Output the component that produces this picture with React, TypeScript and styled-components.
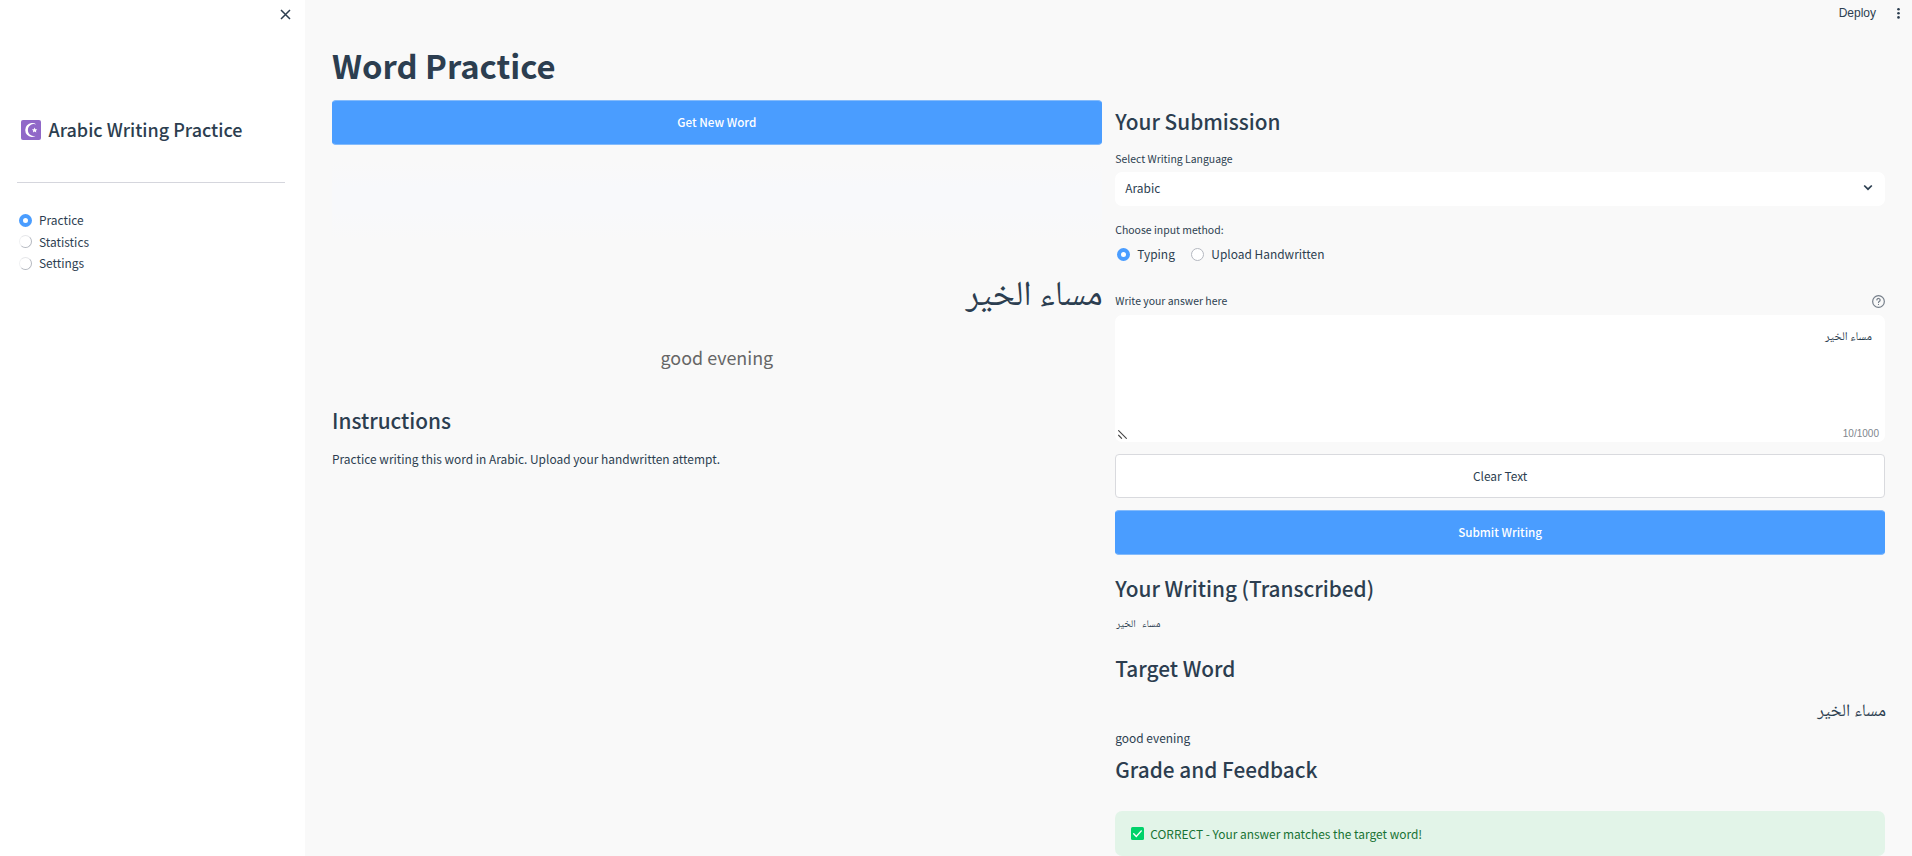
import React from "react";
import styled, { createGlobalStyle } from "styled-components";

const Global = createGlobalStyle`
  * { box-sizing: border-box; }
  body { margin: 0; background: #f9f9f9; overflow: hidden; }
`;

const sans = '"Noto Sans CJK SC", "Noto Sans", sans-serif';
const arabic = '"Noto Naskh Arabic", "DejaVu Sans", sans-serif';

const Page = styled.div`
  display: flex;
  height: 856px;
  overflow: hidden;
  font-family: ${sans};
  font-size: 11.93px;
  color: #2c3e50;
  background: #f9f9f9;
`;
const Sidebar = styled.aside`
  width: 305px;
  flex: none;
  padding: 0 20px 0 17px;
  background: #fff;
`;
const CloseRow = styled.div`
  display: flex;
  justify-content: flex-end;
  height: 110px;
  padding: 9px 0 0;
  margin-right: -6px;
`;
const Brand = styled.div`
  display: flex;
  align-items: center;
  gap: 7.5px;
  height: 40px;
  padding-left: 4px;
`;
const BrandTitle = styled.h2`
  margin: 0;
  padding-bottom: 1px;
  font-size: 17.98px;
  font-weight: 500;
  line-height: 37px;
  white-space: nowrap;
`;
const Divider = styled.hr`
  margin: 32px 0 27px;
  border: 0;
  height: 1px;
  background: #d5d6dd;
`;
const RadioGroup = styled.div<{ $row?: boolean }>`
  display: flex;
  flex-direction: ${(p) => (p.$row ? "row" : "column")};
  gap: ${(p) => (p.$row ? "16.5px" : "1.5px")};
  padding-left: 2px;
`;
const InlineRadioGroup = styled(RadioGroup)`
  margin-top: 6px;
`;
const RadioItem = styled.label`
  display: flex;
  align-items: center;
  gap: 7px;
  height: 20px;
  line-height: 20px;
  white-space: nowrap;
`;
const Dot = styled.span<{ $on?: boolean; $faded?: boolean }>`
  width: 13px;
  height: 13px;
  border-radius: 50%;
  background: #fff;
  border: ${(p) => (p.$on ? "4px solid #4a9dff" : "1px solid #b4b8c0")};
  ${(p) => p.$faded && "border-top-color: #e6e7ea; border-left-color: #f0f1f3;"}
`;
const Main = styled.main`
  flex: 1;
  padding: 0 27px;
`;
const Toolbar = styled.header`
  display: flex;
  justify-content: flex-end;
  align-items: center;
  gap: 20px;
  height: 40px;
  padding-bottom: 14px;
  margin-right: -16px;
  font: 12px/20px "Liberation Sans", sans-serif;
`;
const Title = styled.h1`
  margin: 0 0 10px;
  font-size: 32.8px;
  font-weight: 700;
  line-height: 50px;
`;
const Columns = styled.div`
  display: grid;
  grid-template-columns: 769.7px 769.7px;
  gap: 13.6px;
`;
const Column = styled.section`
  display: flex;
  flex-direction: column;
`;
const Heading = styled.h3<{ $top: number }>`
  margin: ${(p) => p.$top}px 0 0;
  font-size: 20.8px;
  font-weight: 500;
  line-height: 30px;
`;
const Text = styled.p<{ $top: number }>`
  margin: ${(p) => p.$top}px 0 0;
  line-height: 20px;
`;
const Label = styled.div<{ $top: number }>`
  display: flex;
  justify-content: space-between;
  align-items: center;
  margin-top: ${(p) => p.$top}px;
  height: 16px;
  font-size: 10.45px;
  line-height: 16px;
`;
const Button = styled.button<{ $primary?: boolean; $top?: number }>`
  margin: ${(p) => p.$top ?? 0}px 0 0;
  height: ${(p) => (p.$primary ? 45 : 44)}px;
  padding: 0 0 2px;
  border: 1px solid ${(p) => (p.$primary ? "#4a9dff" : "#d9dade")};
  ${(p) => p.$primary && "border-top-color: #84bbfb; border-bottom-color: #84bbfb;"}
  border-radius: 4px;
  background: ${(p) => (p.$primary ? "#4a9dff" : "#fff")};
  color: ${(p) => (p.$primary ? "#fff" : "#2c3e50")};
  font-family: ${sans};
  font-size: ${(p) => (p.$primary ? 11.7 : 11.93)}px;
  font-weight: ${(p) => (p.$primary ? 500 : 400)};
`;
const WordCardTop = styled.div`
  height: 80px;
  margin-top: 15px;
  background: linear-gradient(180deg, #f9f9f9, #f8f9fb 35%, #f8f9fb 65%, #f9f9f9);
`;
const Word = styled.div<{ $size: number; $top: number; $line: number }>`
  margin-top: ${(p) => p.$top}px;
  margin-right: -1px;
  direction: rtl;
  font-family: ${arabic};
  font-size: ${(p) => p.$size}px;
  line-height: ${(p) => p.$line}px;
`;
const Meaning = styled.div`
  margin-top: 4px;
  text-align: center;
  color: #666;
  font-size: 17.9px;
  line-height: 30px;
`;
const Select = styled.div`
  display: flex;
  justify-content: space-between;
  align-items: center;
  margin-top: 5px;
  height: 34px;
  padding: 0 12px 3px 10px;
  border-radius: 7px;
  background: #fff;
`;
const TextArea = styled.div`
  display: flex;
  flex-direction: column;
  justify-content: space-between;
  margin-top: 6px;
  height: 127px;
  padding: 12px 6px 2px 3px;
  border-radius: 7px;
  background: #fff;
`;
const Answer = styled.div`
  direction: rtl;
  padding-right: 7px;
  font-family: ${arabic};
  font-size: 12px;
  line-height: 22px;
`;
const AreaFooter = styled.div`
  display: flex;
  justify-content: space-between;
  align-items: center;
  font: 10px/12px "Liberation Sans", sans-serif;
  color: #80858d;
`;
const Transcribed = styled.div`
  margin-top: 12px;
  padding-left: 1px;
  font-family: ${arabic};
  font-size: 10.3px;
  word-spacing: 4px;
  line-height: 20px;
`;
const Alert = styled.div`
  display: flex;
  align-items: center;
  gap: 6px;
  margin-top: 27px;
  height: 45px;
  padding: 0 0 1px 16px;
  border-radius: 7px;
  background: #e2f4e8;
  color: #177233;
`;

const CloseIcon = () => (
  <svg width="11" height="11" viewBox="0 0 11 11" stroke="#2c3e50" strokeWidth="1.5" fill="none">
    <path d="M1 1l9 9M10 1l-9 9" />
  </svg>
);
const CrescentIcon = () => (
  <svg width="20" height="20" viewBox="0 0 20 20">
    <rect width="20" height="20" rx="2" fill="#9068c8" />
    <path d="M15.4 4.4A7 7 0 1 0 15.4 15.6A6.1 6.1 0 1 1 15.4 4.4z" fill="#fff" />
    <path d="M13.6 7.4l.8 1.8 1.9.2-1.4 1.3.4 1.9-1.7-1-1.7 1 .4-1.9-1.4-1.3 1.9-.2z" fill="#fff" />
  </svg>
);
const MenuIcon = () => (
  <svg width="5" height="13" viewBox="0 0 5 13" fill="#2c3e50">
    <circle cx="2.5" cy="2.2" r="1.3" />
    <circle cx="2.5" cy="6.3" r="1.3" />
    <circle cx="2.5" cy="10.4" r="1.3" />
  </svg>
);
const ChevronIcon = () => (
  <svg width="10" height="7" viewBox="0 0 10 7" fill="none" stroke="#2c3e50" strokeWidth="1.7">
    <path d="M1.2 1.5L5 5.2l3.8-3.7" />
  </svg>
);
const HelpIcon = () => (
  <svg width="13" height="13" viewBox="0 0 24 24" fill="none" stroke="#757e89" strokeWidth="2.2" strokeLinecap="round">
    <circle cx="12" cy="12" r="10.8" />
    <path d="M9 9a3 3 0 0 1 6 .8c0 2-3 2.6-3 4M12 17.4v.1" />
  </svg>
);
const GripIcon = () => (
  <svg width="9" height="9" viewBox="0 0 9 9" fill="none" stroke="#444" strokeWidth="1.1">
    <path d="M.3.3l8.4 8.4M.3 5l3.6 3.7" />
  </svg>
);
const CheckIcon = () => (
  <svg width="13" height="13" viewBox="0 0 13 13" fill="none">
    <rect width="13" height="13" rx="1.5" fill="#00d26a" />
    <path d="M2.7 6.8l2.6 2.6 5-5.5" stroke="#fff" strokeWidth="1.4" strokeLinecap="round" />
  </svg>
);

const WORD = "مساء الخير";

export default function App() {
  return (
    <Page>
      <Global />
      <Sidebar>
        <CloseRow><CloseIcon /></CloseRow>
        <Brand>
          <CrescentIcon />
          <BrandTitle>Arabic Writing Practice</BrandTitle>
        </Brand>
        <Divider />
        <RadioGroup>
          <RadioItem><Dot $on />Practice</RadioItem>
          <RadioItem><Dot $faded />Statistics</RadioItem>
          <RadioItem><Dot $faded />Settings</RadioItem>
        </RadioGroup>
      </Sidebar>
      <Main>
        <Toolbar><span>Deploy</span><MenuIcon /></Toolbar>
        <Title>Word Practice</Title>
        <Columns>
          <Column>
            <Button $primary>Get New Word</Button>
            <WordCardTop />
            <Word $size={35} $top={18} $line={80}>{WORD}</Word>
            <Meaning>good evening</Meaning>
            <Heading $top={33}>Instructions</Heading>
            <Text $top={14}>Practice writing this word in Arabic. Upload your handwritten attempt.</Text>
          </Column>
          <Column>
            <Heading $top={6}>Your Submission</Heading>
            <Label $top={15}>Select Writing Language</Label>
            <Select>Arabic<ChevronIcon /></Select>
            <Label $top={16}>Choose input method:</Label>
            <InlineRadioGroup $row>
              <RadioItem><Dot $on />Typing</RadioItem>
              <RadioItem><Dot />Upload Handwritten</RadioItem>
            </InlineRadioGroup>
            <Label $top={29}>Write your answer here<HelpIcon /></Label>
            <TextArea>
              <Answer>{WORD}</Answer>
              <AreaFooter><GripIcon /><span>10/1000</span></AreaFooter>
            </TextArea>
            <Button $top={12}>Clear Text</Button>
            <Button $primary $top={12}>Submit Writing</Button>
            <Heading $top={18}>Your Writing (Transcribed)</Heading>
            <Transcribed>{WORD}</Transcribed>
            <Heading $top={18}>Target Word</Heading>
            <Word $size={17.6} $top={17} $line={25}>{WORD}</Word>
            <Text $top={3}>good evening</Text>
            <Heading $top={6}>Grade and Feedback</Heading>
            <Alert><CheckIcon />CORRECT - Your answer matches the target word!</Alert>
          </Column>
        </Columns>
      </Main>
    </Page>
  );
}
